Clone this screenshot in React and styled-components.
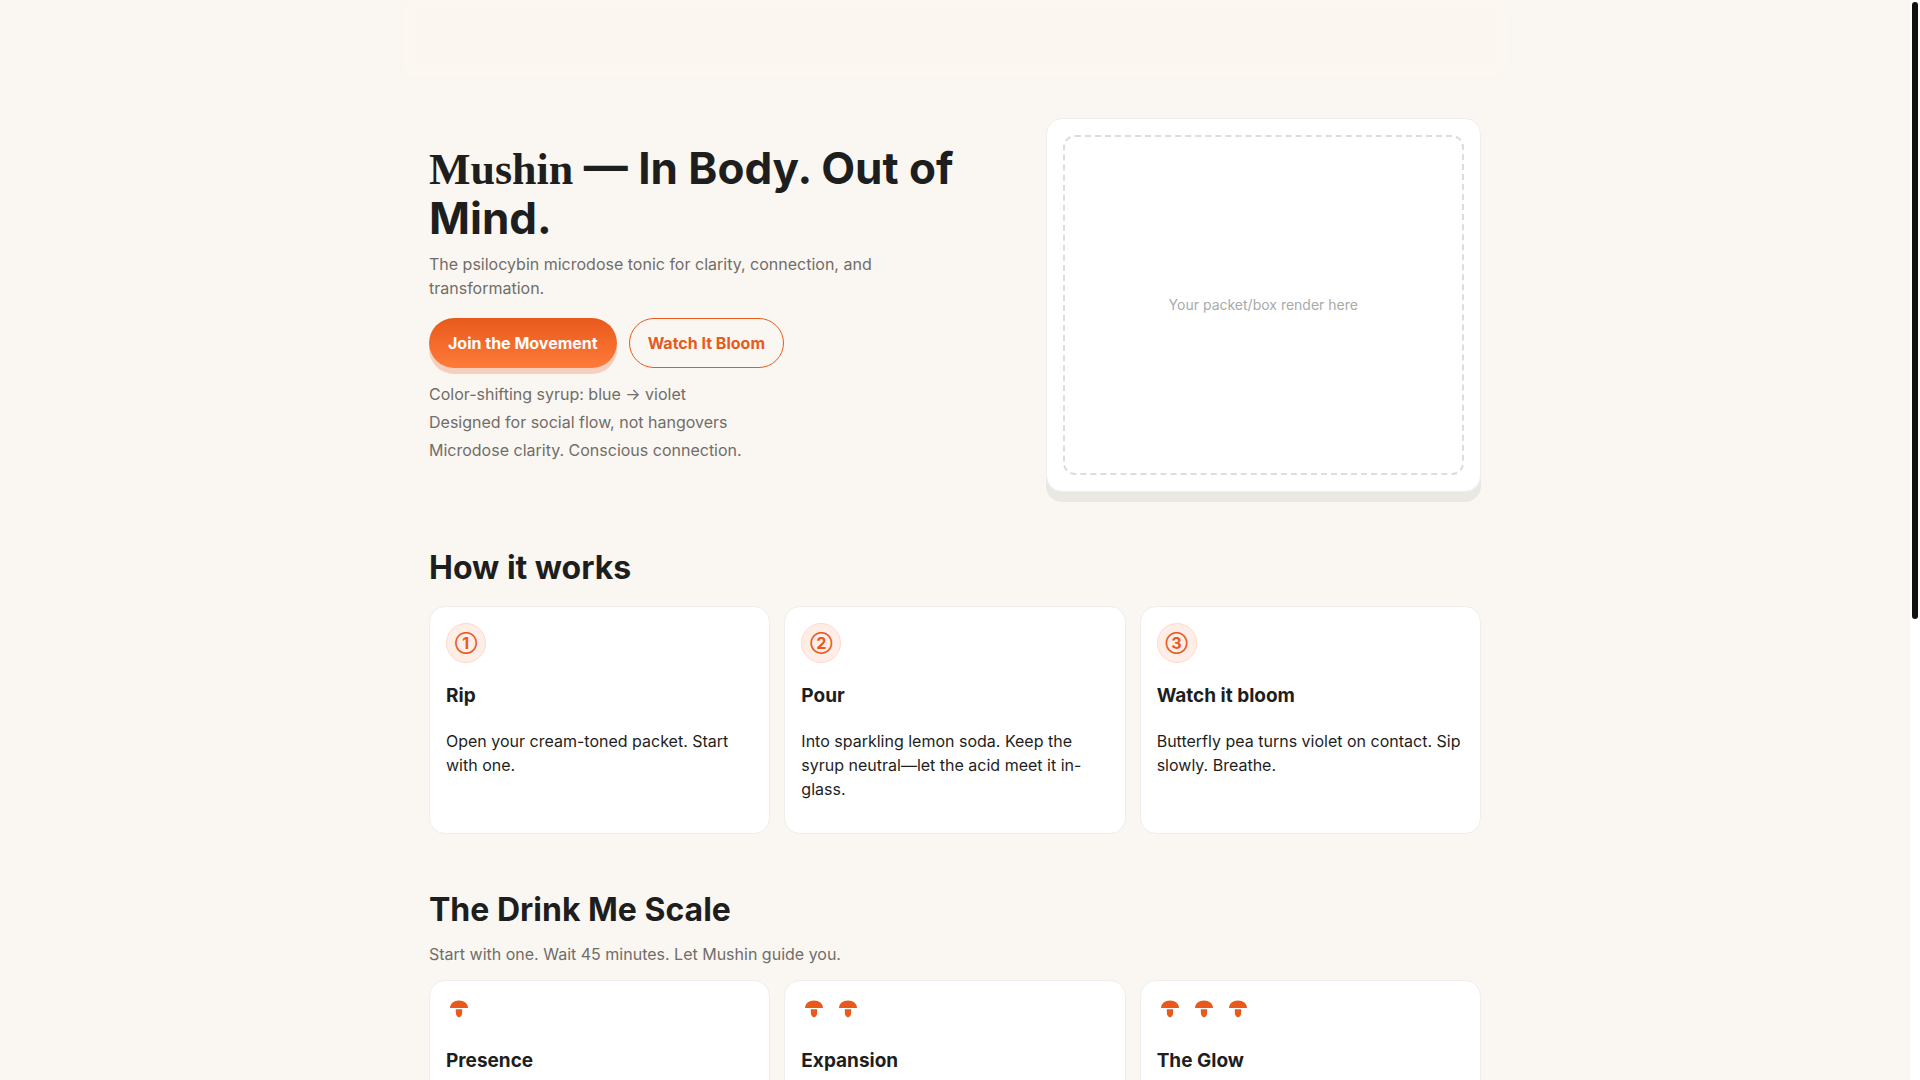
import React from "react";
import styled, { createGlobalStyle } from "styled-components";

const steps = [
  { mark: "①", title: "Rip", text: "Open your cream-toned packet. Start with one." },
  {
    mark: "②",
    title: "Pour",
    text: "Into sparkling lemon soda. Keep the syrup neutral—let the acid meet it in-glass.",
  },
  {
    mark: "③",
    title: "Watch it bloom",
    text: "Butterfly pea turns violet on contact. Sip slowly. Breathe.",
  },
];

const doses = [
  { count: 1, title: "Presence" },
  { count: 2, title: "Expansion" },
  { count: 3, title: "The Glow" },
];

function Mushroom() {
  return (
    <svg width="26" height="26" viewBox="0 0 26 26" fill="#e85a1c" aria-hidden="true">
      <path d="M4 11C4 6.500 8 3.500 13 3.500S22 6.500 22 11Z" />
      <path d="M9.800 12.200h6.400v2.800c0 3.200-1.200 5.200-3.200 5.200s-3.200-2-3.200-5.200Z" />
    </svg>
  );
}

function App() {
  return (
    <Page>
      <GlobalStyle />
      <Content>
        <Nav />
        <Main>
          <Hero>
            <Intro>
              <Title>
                <Brand>Mushin</Brand> — In Body. Out of Mind.
              </Title>
              <Lead>
                The psilocybin microdose tonic for clarity, connection, and
                transformation.
              </Lead>
              <Actions>
                <Button type="button" $primary>
                  Join the Movement
                </Button>
                <Button type="button">Watch It Bloom</Button>
              </Actions>
              <Points>
                <li>Color-shifting syrup: blue → violet</li>
                <li>Designed for social flow, not hangovers</li>
                <li>Microdose clarity. Conscious connection.</li>
              </Points>
            </Intro>
            <Visual>
              <Placeholder>Your packet/box render here</Placeholder>
            </Visual>
          </Hero>
          <Section>
            <Heading>How it works</Heading>
            <Cards>
              {steps.map((step) => (
                <Card key={step.title}>
                  <Badge>{step.mark}</Badge>
                  <CardTitle>{step.title}</CardTitle>
                  <CardText>{step.text}</CardText>
                </Card>
              ))}
            </Cards>
          </Section>
          <Section>
            <Heading>The Drink Me Scale</Heading>
            <Note>Start with one. Wait 45 minutes. Let Mushin guide you.</Note>
            <Cards>
              {doses.map((dose) => (
                <Card key={dose.title}>
                  <Doses>
                    {Array.from({ length: dose.count }, (_, i) => (
                      <Mushroom key={i} />
                    ))}
                  </Doses>
                  <CardTitle>{dose.title}</CardTitle>
                </Card>
              ))}
            </Cards>
          </Section>
        </Main>
      </Content>
      <Rail aria-hidden="true">
        <Thumb />
      </Rail>
    </Page>
  );
}

const GlobalStyle = createGlobalStyle`
  * {
    box-sizing: border-box;
  }

  body {
    margin: 0;
    background: #faf7f2;
    color: #1e1e1e;
    font-family: Inter, sans-serif;
    font-size: 16px;
    line-height: 24px;
  }
`;

const Page = styled.div`
  display: flex;
  height: 100vh;
`;

const Content = styled.div`
  flex: 1;
  overflow-y: auto;
  scrollbar-width: none;
`;

const Rail = styled.div`
  width: 10px;
  padding: 2px;
  background: #fff;
`;

const Thumb = styled.div`
  height: 57.3%;
  border-radius: 3px;
  background: #111;
`;

const Nav = styled.header`
  max-width: 1100px;
  height: 76px;
  margin: 0 auto;
  border: 10px solid #fcf8f1;
  border-radius: 10px;
  background: #fbf6f0;
  box-shadow: 0 0 3px #fcf8ef;
`;

const Main = styled.main`
  max-width: 1100px;
  margin: 0 auto;
  padding: 42px 24px 56px;
`;

const Hero = styled.section`
  display: grid;
  grid-template-columns: 12fr 9fr;
  gap: 36px;
  align-items: center;
`;

const Intro = styled.div`
  padding-bottom: 5px;
`;

const Title = styled.h1`
  margin: 0 0 9px;
  font-size: 44px;
  line-height: 49px;
`;

const Brand = styled.span`
  font-family: "Liberation Serif", serif;
`;

const Lead = styled.p`
  max-width: 540px;
  margin: 0 0 18px;
  color: #716d68;
`;

const Actions = styled.div`
  display: flex;
  gap: 12px;
  margin-bottom: 14px;
`;

const Button = styled.button`
  padding: 12px 18px;
  border: 1px solid ${(props) => (props.$primary ? "transparent" : "#e85a1c")};
  border-radius: 999px;
  background: ${(props) =>
    props.$primary ? "linear-gradient(#e85a1c, #ff7a3a) border-box" : "transparent"};
  box-shadow: ${(props) => (props.$primary ? "0 6px 0 #f7cfbe" : "none")};
  color: ${(props) => (props.$primary ? "#fff" : "#e85a1c")};
  font: inherit;
  font-weight: 700;
  cursor: pointer;
`;

const Points = styled.ul`
  display: grid;
  gap: 4px;
  margin: 0;
  padding: 0;
  list-style: none;
  color: #716d68;
`;

const Visual = styled.div`
  padding: 16px;
  border: 1px solid #eee;
  border-radius: 16px;
  background: #fff;
  box-shadow: 0 10px 0 #e9e8e3;
`;

const Placeholder = styled.div`
  display: grid;
  place-items: center;
  height: 340px;
  border: 2px dashed #ddd;
  border-radius: 12px;
  color: #aaa;
  font-size: 14px;
`;

const Section = styled.section`
  padding-top: 52px;
`;

const Heading = styled.h2`
  margin: 0;
  font-size: 32px;
  line-height: 48px;
`;

const Note = styled.p`
  margin: 8px 0 0;
  color: #716d68;
`;

const Cards = styled.div`
  display: grid;
  grid-template-columns: repeat(3, 1fr);
  gap: 14px;
  margin-top: 14px;
`;

const Card = styled.article`
  padding: 16px;
  border: 1px solid #eee;
  border-radius: 16px;
  background: #fff;
`;

const Badge = styled.div`
  display: grid;
  place-items: center;
  width: 40px;
  height: 40px;
  border: 1px solid #ffd9c9;
  border-radius: 50%;
  background: #ffeee7;
  color: #e85a1c;
  font-weight: 700;
`;

const CardTitle = styled.h3`
  margin: 19px 0;
  font-size: 19px;
  line-height: 28px;
`;

const CardText = styled.p`
  margin: 0 0 16px;
`;

const Doses = styled.div`
  display: flex;
  gap: 8px;
  height: 31px;
`;

export default App;
